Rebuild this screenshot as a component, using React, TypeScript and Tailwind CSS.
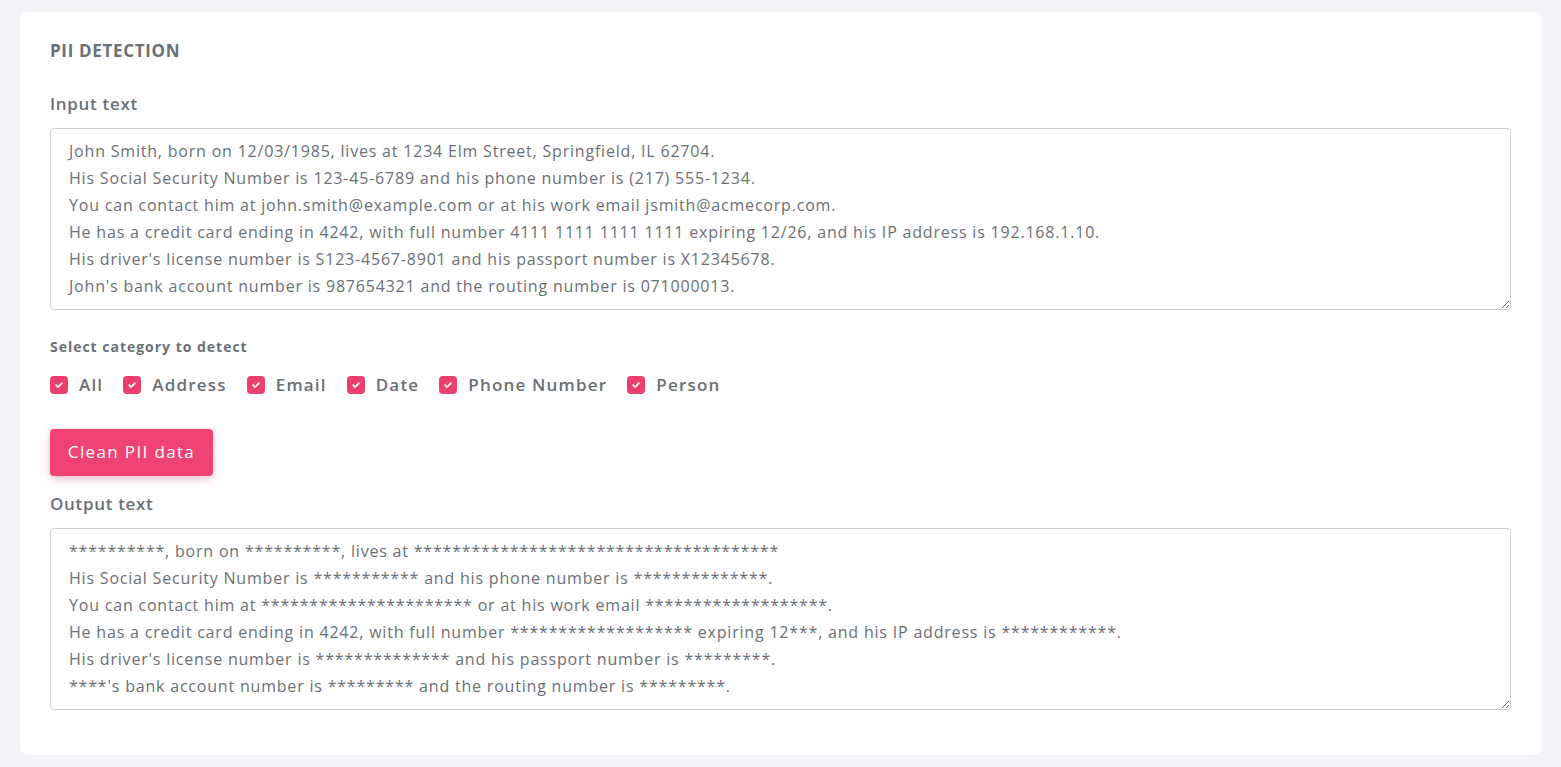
const inputText = `John Smith, born on 12/03/1985, lives at 1234 Elm Street, Springfield, IL 62704.
His Social Security Number is 123-45-6789 and his phone number is (217) 555-1234.
You can contact him at john.smith@example.com or at his work email jsmith@acmecorp.com.
He has a credit card ending in 4242, with full number 4111 1111 1111 1111 expiring 12/26, and his IP address is 192.168.1.10.
His driver's license number is S123-4567-8901 and his passport number is X12345678.
John's bank account number is 987654321 and the routing number is 071000013.`;

const outputText = `**********, born on **********, lives at **************************************
His Social Security Number is *********** and his phone number is **************.
You can contact him at ********************** or at his work email *******************.
He has a credit card ending in 4242, with full number ******************* expiring 12***, and his IP address is ************.
His driver's license number is ************** and his passport number is *********.
****'s bank account number is ********* and the routing number is *********.`;

const categories = ['All', 'Address', 'Email', 'Date', 'Phone Number', 'Person'];

function CheckBox({ label }: { label: string }) {
  return (
    <label className="flex items-center gap-[11px]">
      <span className="flex h-[18px] w-[18px] items-center justify-center rounded-[4px] bg-[#ec3f6d]">
        <svg width="10" height="10" viewBox="0 0 12 12" fill="none">
          <path d="M2.5 6.2l2.3 2.3 4.7-4.8" stroke="white" strokeWidth="2" strokeLinecap="round" strokeLinejoin="round" />
        </svg>
      </span>
      <span className="text-[17px] font-semibold tracking-[0.07em] text-[#6b6f76]">{label}</span>
    </label>
  );
}

function TextBox({ value }: { value: string }) {
  return (
    <textarea
      readOnly
      value={value}
      className="block h-[182px] w-full resize-y rounded-[4px] border border-[#cfcfcf] bg-white px-[18px] py-[9px] text-[16px] leading-[27px] tracking-[0.05em] text-[#6b6f76] outline-none"
    />
  );
}

export default function App() {
  return (
    <div
      className="min-h-[767px] bg-[#f3f4f8] px-[20px] pb-[12px] pt-[12px]"
      style={{ fontFamily: '"Open Sans", "Noto Sans", sans-serif' }}
    >
      <div className="rounded-[8px] bg-white px-[30px] pb-[45px] pt-[28px]">
        <h2 className="text-[17px] font-bold leading-[22px] tracking-[0.04em] text-[#6b6f76]">PII DETECTION</h2>

        <p className="mt-[31px] text-[17px] font-semibold leading-[22px] tracking-[0.04em] text-[#6b6f76]">
          Input text
        </p>
        <div className="mt-[13px]">
          <TextBox value={inputText} />
        </div>

        <p className="mt-[28px] text-[14px] font-bold leading-[18px] tracking-[0.07em] text-[#6b6f76]">
          Select category to detect
        </p>
        <div className="mt-[16px] flex items-center gap-[20px]">
          {categories.map((c) => (
            <CheckBox key={c} label={c} />
          ))}
        </div>

        <button className="mt-[31px] h-[47px] w-[163px] rounded-[4px] bg-[#ef4273] text-[17px] tracking-[0.08em] text-white shadow-[0_3px_8px_rgba(239,66,115,0.35)]">
          Clean PII data
        </button>

        <p className="mt-[17px] text-[17px] font-semibold leading-[22px] tracking-[0.04em] text-[#6b6f76]">
          Output text
        </p>
        <div className="mt-[13px]">
          <TextBox value={outputText} />
        </div>
      </div>
    </div>
  );
}
